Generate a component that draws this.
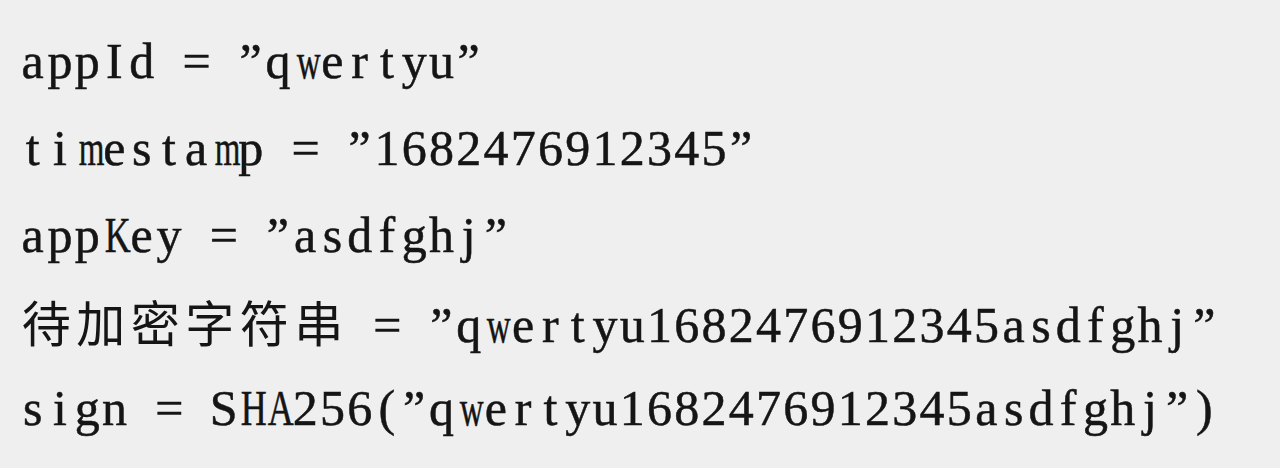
// SimSun-like look: a serif face laid out in fixed half-width cells
const lines = [
  "appId = \u201dqwertyu\u201d",
  "timestamp = \u201d1682476912345\u201d",
  "appKey = \u201dasdfghj\u201d",
  "待加密字符串 = \u201dqwertyu1682476912345asdfghj\u201d",
  "sign = SHA256(\u201dqwertyu1682476912345asdfghj\u201d)",
];

function squeeze(ch: string) {
  if ("mwMW".includes(ch)) return "scale-x-[0.66]";
  if ("AHKD".includes(ch)) return "scale-x-[0.72]";
  return "";
}

function Cell({ ch }: { ch: string }) {
  if (/[\u4e00-\u9fff]/.test(ch)) {
    return (
      <span className="inline-block w-[54.5px] text-center font-['Noto_Sans_CJK_SC',sans-serif] text-[49px] font-normal [-webkit-text-stroke:0px]">
        {ch}
      </span>
    );
  }
  return (
    <span className={`inline-block w-[27.25px] text-center ${squeeze(ch)}`}>
      {ch === " " ? "\u00a0" : ch}
    </span>
  );
}

export default function App() {
  return (
    <div className="w-[1280px] h-[468px] bg-[#efefef] overflow-hidden pt-[18px] pl-[19px]">
      <div className="font-['Liberation_Serif','Noto_Sans_CJK_SC',serif] text-[50px] leading-[86.75px] text-[#151515] [-webkit-text-stroke:0.5px_#151515] whitespace-nowrap">
        {lines.map((line, i) => (
          <div key={i} className="h-[86.75px]">
            {Array.from(line).map((ch, j) => (
              <Cell key={j} ch={ch} />
            ))}
          </div>
        ))}
      </div>
    </div>
  );
}
